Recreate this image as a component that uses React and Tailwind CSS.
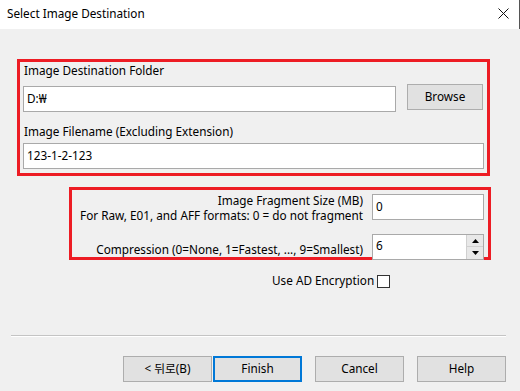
import React from "react";

const font = { fontFamily: '"Noto Sans", "Noto Sans CJK KR", sans-serif' };

const Button = ({ children, primary }) => (
  <button
    className={
      primary
        ? "h-[26px] w-[89px] bg-[#e1e1e1] border-2 border-[#0078d7] text-[11.75px] text-black"
        : "h-[26px] w-[89px] bg-[#e1e1e1] border border-[#adadad] text-[11.75px] text-black"
    }
  >
    {children}
  </button>
);

const App = () => {
  return (
    <div
      className="w-[520px] h-[391px] bg-[#f0f0f0] flex flex-col overflow-hidden text-black text-[11.75px]"
      style={font}
    >
      {/* TITLE BAR */}
      <div className="h-[29px] bg-white flex items-center justify-between pl-[7px] pr-[10px] pb-[2px] border-r border-[#555555]">
        <span className="text-[11.75px]">Select Image Destination</span>
        <svg width="11" height="11" viewBox="0 0 11 11">
          <path d="M0.5 0.5 L10.5 10.5 M10.5 0.5 L0.5 10.5" stroke="#111" strokeWidth="1" />
        </svg>
      </div>

      {/* DESTINATION BOX */}
      <div className="mt-[30px] ml-[17px] w-[473px] h-[117px] border-[3px] border-[#ed1c24] flex flex-col">
        <div className="h-[16px] leading-[16px] pl-[4px]">Image Destination Folder</div>
        <div className="flex items-start mt-[6px]">
          <div className="ml-[3px] mt-[2px] w-[373px] h-[26px] bg-white border border-[#a9a9a9] flex items-center px-[3px]">
            D:₩
          </div>
          <button className="ml-[11px] w-[76px] h-[26px] bg-[#e1e1e1] border border-[#adadad]">
            Browse
          </button>
        </div>
        <div className="h-[16px] leading-[16px] pl-[4px] mt-[11px]">
          Image Filename (Excluding Extension)
        </div>
        <div className="ml-[3px] mt-[4px] w-[461px] h-[26px] bg-white border border-[#a9a9a9] flex items-center px-[3px]">
          123-1-2-123
        </div>
      </div>

      {/* FRAGMENT / COMPRESSION BOX */}
      <div className="mt-[11px] ml-[69px] w-[422px] h-[73px] border-[3px] border-[#ed1c24] flex flex-col">
        <div className="flex items-start mt-[3px]">
          <div className="flex-1 text-right leading-[15px]">
            <div className="h-[15px]">Image Fragment Size (MB)</div>
            <div className="h-[15px]">For Raw, E01, and AFF formats: 0 = do not fragment</div>
          </div>
          <div className="ml-[9px] mr-[4px] mt-[1px] w-[112px] h-[26px] bg-white border border-[#a9a9a9] flex items-center px-[3px]">
            0
          </div>
        </div>
        <div className="flex items-start mt-[11px]">
          <div className="flex-1 text-right leading-[15px] mt-[8px]">
            Compression (0=None, 1=Fastest, ..., 9=Smallest)
          </div>
          <div className="ml-[9px] mr-[4px] w-[112px] h-[26px] bg-white border border-[#a9a9a9] flex">
            <div className="flex-1 px-[3px] leading-[20px]">6</div>
            <div className="w-[17px] flex flex-col">
              <div className="h-[12px] bg-[#e8e8e8] border-l border-b border-[#d0d0d0] flex items-center justify-center">
                <svg width="7" height="4" viewBox="0 0 7 4">
                  <path d="M3.5 0 L7 4 L0 4 Z" fill="#000" />
                </svg>
              </div>
              <div className="flex-1 bg-[#e8e8e8] border-l border-[#d0d0d0] flex items-center justify-center">
                <svg width="7" height="4" viewBox="0 0 7 4">
                  <path d="M0 0 L7 0 L3.5 4 Z" fill="#000" />
                </svg>
              </div>
            </div>
          </div>
        </div>
      </div>

      {/* ENCRYPTION */}
      <div className="mt-[13px] h-[16px] flex items-center pl-[272px]">
        <span>Use AD Encryption</span>
        <span className="ml-[3px] w-[13px] h-[13px] bg-white border border-[#333333]" />
      </div>

      {/* SEPARATOR */}
      <div className="mt-[46px] ml-[11px] w-[495px]">
        <div className="h-[1px] bg-[#c4c4c4]" />
        <div className="h-[1px] bg-white" />
      </div>

      {/* BUTTONS */}
      <div className="mt-[19px] flex pl-[123px]">
        <Button>&lt; 뒤로(B)</Button>
        <div className="ml-[1px]">
          <Button primary>Finish</Button>
        </div>
        <div className="ml-[13px]">
          <Button>Cancel</Button>
        </div>
        <div className="ml-[13px]">
          <Button>Help</Button>
        </div>
      </div>
    </div>
  );
};

export default App;
